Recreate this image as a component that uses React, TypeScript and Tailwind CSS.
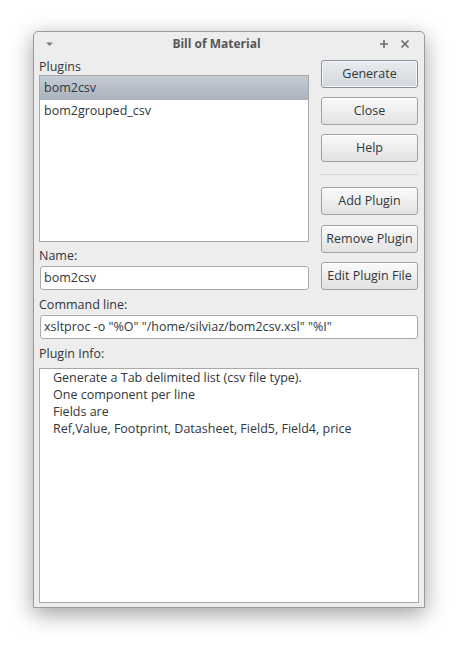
const font = { fontFamily: '"Open Sans", "Noto Sans", sans-serif' };

function Button({ label, primary }: { label: string; primary?: boolean }) {
  return (
    <button
      className={
        "h-[28px] w-full rounded-[3px] border text-[12.5px] text-[#31363b] " +
        (primary
          ? "border-[#8a9098] bg-gradient-to-b from-[#e8ebee] to-[#d3d8de] shadow-[inset_0_0_0_1px_#f4f6f8]"
          : "border-[#a2a2a2] bg-gradient-to-b from-[#fbfbfb] to-[#e2e2e2] shadow-[inset_0_1px_0_#ffffff]")
      }
    >
      {label}
    </button>
  );
}

function Field({ value }: { value: string }) {
  return (
    <div className="flex h-[24px] items-center rounded-[3px] border border-[#a9a9a9] bg-white px-[3px] text-[12.5px] text-[#31363b]">
      {value}
    </div>
  );
}

export default function App() {
  return (
    <div className="min-h-[661px] bg-white pt-[31px] pl-[33px]" style={font}>
      <div className="flex h-[577px] w-[392px] flex-col rounded-t-[5px] border border-[#9a9a9a] bg-[#ededed] shadow-[0_6px_22px_rgba(0,0,0,0.38)]">
        {/* title bar */}
        <div className="flex h-[22px] items-center px-[10px] pt-[1px]">
          <svg width="9" height="6" viewBox="0 0 9 6" className="ml-[1px]">
            <path d="M1 1.5h7L4.5 5z" fill="#7a7a7a" />
          </svg>
          <div className="flex-1 text-center text-[12px] font-bold text-[#575757]">Bill of Material</div>
          <svg width="10" height="10" viewBox="0 0 10 10" className="mr-[11px]">
            <path d="M5 1v8M1 5h8" stroke="#6a6a6a" strokeWidth="1.6" />
          </svg>
          <svg width="10" height="10" viewBox="0 0 10 10" className="mr-[4px]">
            <path d="M1.5 1.5l7 7M8.5 1.5l-7 7" stroke="#6a6a6a" strokeWidth="1.6" />
          </svg>
        </div>

        <div className="flex flex-1 flex-col px-[5px] pb-[4px] text-[12.5px]">
          <div className="flex gap-[12px]">
            {/* left column */}
            <div className="flex w-[270px] flex-col">
              <div className="mt-[4px] h-[17px] leading-[17px] text-[#31363b]">Plugins</div>
              <div className="h-[167px] border border-[#a9a9a9] bg-white">
                <div className="flex h-[24px] items-center bg-gradient-to-b from-[#c4ccd5] to-[#a9b3be] px-[4px] text-[#31363b]">
                  bom2csv
                </div>
                <div className="flex h-[22px] items-center px-[4px] text-[#31363b]">bom2grouped_csv</div>
              </div>
              <div className="mt-[5px] h-[17px] leading-[17px] text-[#31363b]">Name:</div>
              <div className="mt-[2px] pl-[1px]">
                <Field value="bom2csv" />
              </div>
            </div>

            {/* right column */}
            <div className="mt-[6px] flex w-[97px] flex-col">
              <Button label="Generate" primary />
              <div className="mt-[9px]">
                <Button label="Close" />
              </div>
              <div className="mt-[9px]">
                <Button label="Help" />
              </div>
              <div className="mt-[12px] mb-[12px] h-px bg-[#d6d6d6]" />
              <Button label="Add Plugin" />
              <div className="mt-[10px]">
                <Button label="Remove Plugin" />
              </div>
              <div className="mt-[9px]">
                <Button label="Edit Plugin File" />
              </div>
            </div>
          </div>

          <div className="mt-[6px] h-[17px] leading-[17px] text-[#31363b]">Command line:</div>
          <div className="mt-[2px] pl-[1px] pr-[1px]">
            <Field value={'xsltproc -o "%O" "/home/silviaz/bom2csv.xsl" "%I"'} />
          </div>
          <div className="mt-[6px] h-[17px] leading-[17px] text-[#31363b]">Plugin Info:</div>
          <div className="mt-[6px] flex-1 border border-[#a9a9a9] bg-white px-[13px] leading-[17px] text-[#31363b]">
            <div>Generate a Tab delimited list (csv file type).</div>
            <div>One component per line</div>
            <div>Fields are</div>
            <div>Ref,Value, Footprint, Datasheet, Field5, Field4, price</div>
          </div>
        </div>
      </div>
    </div>
  );
}
